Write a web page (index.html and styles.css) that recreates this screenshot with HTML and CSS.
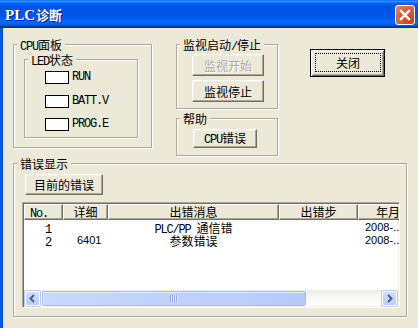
FILE: index.html
```html
<!DOCTYPE html>
<html lang="zh-CN">
<head>
    <meta charset="UTF-8">
    <title>PLC诊断</title>
    <link rel="stylesheet" href="styles.css">
</head>
<body>
    <div class="window">
        <div class="titlebar">
            <span class="title"><span class="title-lat">PLC</span>诊断</span>
            <span class="close-x">
                <svg width="20" height="20" viewBox="0 0 20 20">
                    <path d="M5.5 5.5 L14.5 14.5 M14.5 5.5 L5.5 14.5" stroke="#fff" stroke-width="2.6" stroke-linecap="square" fill="none"/>
                </svg>
            </span>
        </div>

        <div class="client">
            <div class="top">
                <div class="group cpu">
                    <div class="group-title"><span class="lat">CPU</span>面板</div>
                    <div class="group led">
                        <div class="group-title"><span class="lat">LED</span>状态</div>
                        <div class="led-row"><span class="lamp"></span><span class="lat">RUN</span></div>
                        <div class="led-row"><span class="lamp"></span><span class="lat">BATT.V</span></div>
                        <div class="led-row"><span class="lamp"></span><span class="lat">PROG.E</span></div>
                    </div>
                </div>

                <div class="mid">
                    <div class="group monitor">
                        <div class="group-title">监视启动<span class="lat">/</span>停止</div>
                        <button class="btn mon-btn" disabled>监视开始</button>
                        <button class="btn mon-btn">监视停止</button>
                    </div>
                    <div class="group help">
                        <div class="group-title">帮助</div>
                        <button class="btn help-btn"><span class="lat">CPU</span>错误</button>
                    </div>
                </div>

                <button class="btn default close-btn"><span class="focus">关闭</span></button>
            </div>

            <div class="group errors">
                <div class="group-title">错误显示</div>
                <button class="btn cur-btn">目前的错误</button>

                <div class="list">
                    <div class="list-head">
                        <div class="hcell c-no left"><span class="lat">No.</span></div>
                        <div class="hcell c-detail">详细</div>
                        <div class="hcell c-msg">出错消息</div>
                        <div class="hcell c-step">出错步</div>
                        <div class="hcell c-date">年月日</div>
                    </div>
                    <div class="list-body">
                        <div class="row">
                            <div class="cell c-no"><span class="lat">1</span></div>
                            <div class="cell c-detail"></div>
                            <div class="cell c-msg mid-txt"><span class="lat">PLC/PP </span>通信错</div>
                            <div class="cell c-step"></div>
                            <div class="cell c-date date">2008-...</div>
                        </div>
                        <div class="row">
                            <div class="cell c-no"><span class="lat">2</span></div>
                            <div class="cell c-detail digits">6401</div>
                            <div class="cell c-msg mid-txt">参数错误</div>
                            <div class="cell c-step"></div>
                            <div class="cell c-date date">2008-...</div>
                        </div>
                    </div>
                    <div class="hscroll">
                        <span class="sb-btn">
                            <svg width="9" height="9" viewBox="0 0 9 9"><path d="M6 1 L2.5 4.5 L6 8" stroke="#4D6185" stroke-width="2" fill="none"/></svg>
                        </span>
                        <span class="sb-thumb"><span class="grip"></span></span>
                        <span class="sb-track"></span>
                        <span class="sb-btn">
                            <svg width="9" height="9" viewBox="0 0 9 9"><path d="M3 1 L6.5 4.5 L3 8" stroke="#4D6185" stroke-width="2" fill="none"/></svg>
                        </span>
                    </div>
                </div>
            </div>
        </div>
    </div>
</body>
</html>
```

FILE: styles.css
```css
* {
    box-sizing: border-box;
}
body {
    margin: 0;
    font-family: "Noto Sans CJK SC", "Liberation Sans", sans-serif;
    font-size: 12px;
    line-height: 13px;
    color: #000;
    background: #ECE9D8;
}
.lat {
    font-family: "Liberation Mono", "Noto Sans CJK SC", monospace;
    font-size: 12px;
    letter-spacing: -1.2px;
}
.window {
    width: 418px;
    height: 328px;
    overflow: hidden;
    display: flex;
    flex-direction: column;
    background: #ECE9D8;
}

/* title bar */
.titlebar {
    height: 28px;
    flex: none;
    display: flex;
    align-items: center;
    justify-content: space-between;
    padding: 1px 3px 0 5px;
    background: linear-gradient(180deg, #0058ee, #3593ff 4%, #288eff 6%, #127dff 8%, #036ffc 10%, #0262ee 14%, #0057e5 20%, #0054e3 24%, #0055eb 56%, #005bf5 66%, #026afe 76%, #0062ef 86%, #0052d6 92%, #0040ab 94%, #003092);
}
.title {
    color: #fff;
    font-weight: bold;
    font-size: 13px;
    line-height: 16px;
    text-shadow: 1px 1px #0a1a8a;
}
.title-lat {
    font-family: "Liberation Serif", serif;
    font-size: 15px;
    margin-right: 1px;
}
.close-x {
    width: 20px;
    height: 20px;
    border: 1px solid #fff;
    border-radius: 3px;
    background: radial-gradient(circle at 85% 85%, #c9431f 0%, #d95534 45%, #e2704e 80%, #ea8f72 100%);
    display: flex;
    align-items: center;
    justify-content: center;
}
.close-x svg {
    display: block;
}

.client {
    flex: 1;
    border-left: 3px solid #0855DD;
    padding: 16px 0 0 10px;
}
.top {
    display: flex;
    align-items: flex-start;
    height: 119px;
}

/* etched group boxes */
.group {
    border: 1px solid #ACA899;
    box-shadow: 1px 1px 0 #fff, inset 1px 1px 0 #fff;
}
.group-title {
    width: fit-content;
    height: 13px;
    margin: -7px 0 0 3px;
    padding: 0 3px;
    background: #ECE9D8;
    white-space: nowrap;
}
.cpu {
    width: 139px;
    height: 104px;
}
.led {
    width: 114px;
    height: 79px;
    margin: 8px 0 0 10px;
}
.led-row {
    display: flex;
    align-items: center;
    height: 13px;
    margin: 10px 0 0 20px;
}
.group-title + .led-row {
    margin-top: 5px;
}
.group-title + .led-row + .led-row {
    margin-top: 11px;
}
.lamp {
    width: 24px;
    height: 13px;
    margin-right: 3px;
    background: #fff;
    border: 1px solid #000;
}
.mid {
    width: 102px;
    margin-left: 24px;
}
.monitor {
    height: 65px;
}
.help {
    height: 38px;
    margin-top: 9px;
}

/* classic buttons */
.btn {
    font: inherit;
    color: #000;
    padding: 0;
    display: block;
    text-align: center;
    white-space: nowrap;
    background: #ECE9D8;
    border: 1px solid;
    border-color: #fff #716F64 #716F64 #fff;
    box-shadow: inset -1px -1px 0 #ACA899, inset 1px 1px 0 #F1EFE2;
}
.btn:disabled {
    color: #ACA899;
    text-shadow: 1px 1px 0 #fff;
}
.btn.default {
    display: flex;
    border: 1px solid #000;
    box-shadow: inset 1px 1px 0 #fff, inset -1px -1px 0 #716F64, inset 2px 2px 0 #F1EFE2, inset -2px -2px 0 #ACA899;
    padding: 3px 3px 4px 4px;
}
.focus {
    flex: 1;
    align-self: stretch;
    display: flex;
    align-items: center;
    justify-content: center;
    border: 1px dotted #000;
}
.mon-btn {
    width: 72px;
    height: 22px;
    line-height: 19px;
    margin: 3px 0 0 15px;
}
.mon-btn + .mon-btn {
    margin-top: 4px;
}
.help-btn {
    width: 64px;
    height: 19px;
    line-height: 16px;
    margin: 4px 0 0 16px;
}
.close-btn {
    width: 75px;
    height: 28px;
    margin: 5px 0 0 32px;
}

/* error display */
.errors {
    width: 394px;
    height: 154px;
}
.cur-btn {
    width: 78px;
    height: 21px;
    line-height: 18px;
    margin: 4px 0 0 11px;
}
.list {
    width: 378px;
    height: 106px;
    margin: 7px 0 0 8px;
    padding: 1px;
    background: #fff;
    border: 1px solid;
    border-color: #ACA899 #fff #fff #ACA899;
    box-shadow: inset 1px 1px 0 #716F64, inset -1px -1px 0 #F1EFE2;
    display: flex;
    flex-direction: column;
    overflow: hidden;
}
.list-head, .row {
    display: flex;
    flex: none;
}
.list-head {
    height: 16px;
}
.hcell {
    flex: none;
    height: 16px;
    line-height: 14px;
    text-align: center;
    white-space: nowrap;
    overflow: hidden;
    background: #ECE9D8;
    border: 1px solid;
    border-color: #fff #716F64 #716F64 #fff;
    box-shadow: inset -1px -1px 0 #ACA899;
}
.hcell.left {
    text-align: left;
    padding-left: 5px;
}
.c-no { width: 39px; }
.c-detail { width: 45px; }
.c-msg { width: 171px; }
.c-step { width: 79px; }
.c-date { width: 72px; }
.list-body {
    flex: 1;
    padding-top: 1px;
}
.row {
    height: 13px;
}
.cell {
    flex: none;
    height: 13px;
    white-space: nowrap;
}
.cell.c-no {
    padding-left: 21px;
}
.cell.c-detail {
    padding-left: 14px;
}
.digits, .date {
    font-family: "Liberation Sans", sans-serif;
    font-size: 11px;
}
.mid-txt {
    text-align: center;
}
.date {
    padding-left: 7px;
}

/* xp scrollbar */
.hscroll {
    flex: none;
    height: 16px;
    display: flex;
    align-items: center;
    padding: 0 1px;
    background: linear-gradient(180deg, #EEEDE5, #F8F8F4 40%, #FDFDFB);
}
.sb-btn {
    width: 15px;
    height: 15px;
    flex: none;
    border: 1px solid #fff;
    border-radius: 2px;
    background: linear-gradient(180deg, #D0DDFD, #B9CCF9);
    display: flex;
    align-items: center;
    justify-content: center;
    box-shadow: 0 0 0 1px #B8C9F2;
}
.sb-btn svg {
    display: block;
}
.sb-thumb {
    width: 264px;
    height: 15px;
    flex: none;
    margin-left: 2px;
    border: 1px solid #A6BAF0;
    border-radius: 2px;
    background: linear-gradient(90deg, #C9D8FC, #BED0FA 60%, #B8CBF8);
    box-shadow: inset 1px 1px 0 #E4EBFE;
    display: flex;
    align-items: center;
    justify-content: center;
}
.grip {
    width: 8px;
    height: 7px;
    background: repeating-linear-gradient(90deg, #8CA4E2 0 1px, #EEF3FF 1px 2px);
}
.sb-track {
    flex: 1;
}
```
